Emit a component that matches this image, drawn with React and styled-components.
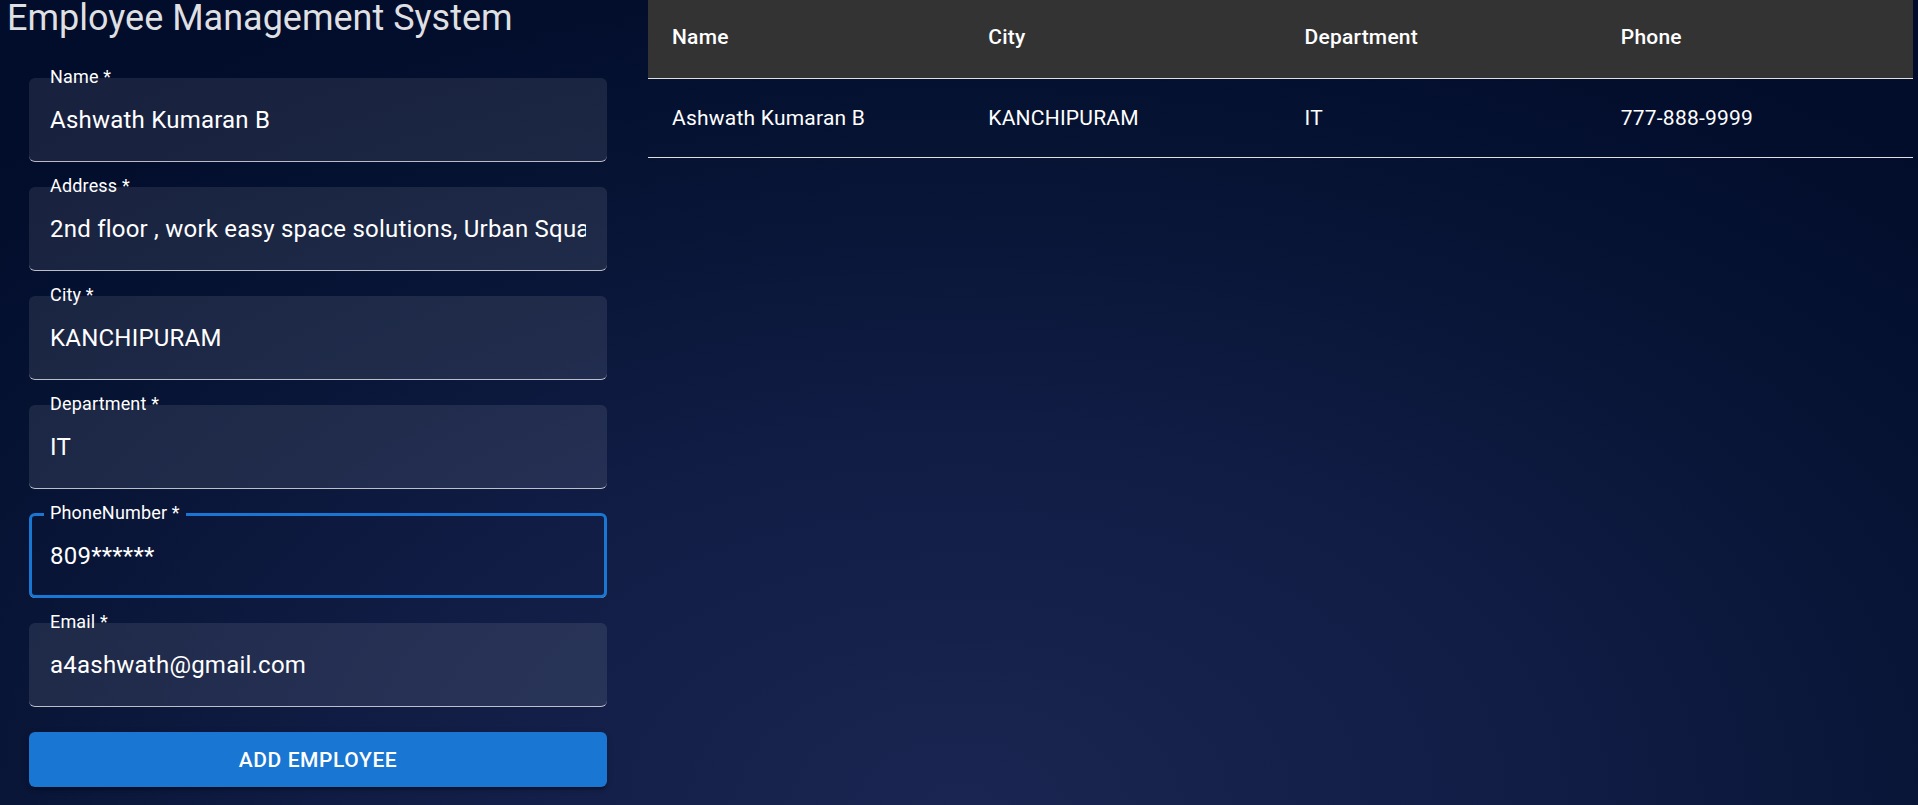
import React from "react";
import styled, { createGlobalStyle } from "styled-components";

const GlobalStyle = createGlobalStyle`
  * {
    box-sizing: border-box;
  }
  html,
  body {
    margin: 0;
    padding: 0;
    min-height: 100%;
  }
  body {
    font-family: Roboto, "Liberation Sans", Arial, sans-serif;
    background: radial-gradient(
      ellipse 75% 110% at 50% 100%,
      #1a2551 0%,
      #111d45 40%,
      #061333 75%,
      #020c2b 100%
    );
    background-attachment: fixed;
    min-height: 100vh;
    color: #fff;
  }
`;

const Page = styled.div`
  display: flex;
  align-items: flex-start;
  min-height: 100vh;
  padding-right: 5px;
`;

const FormColumn = styled.div`
  width: 648px;
  flex-shrink: 0;
  display: flex;
  flex-direction: column;
`;

const Title = styled.h1`
  margin: 0;
  padding-left: 7px;
  font-size: 36px;
  line-height: 36px;
  font-weight: 400;
  color: rgba(255, 255, 255, 0.88);
`;

const Form = styled.form`
  display: flex;
  flex-direction: column;
  gap: 25px;
  margin-top: 42px;
  padding: 0 41px 0 29px;
`;

const FieldWrap = styled.div`
  position: relative;
  height: 84px;
  border-radius: 6px;
  background: ${(props) =>
    props.focused ? "transparent" : "rgba(255, 255, 255, 0.09)"};
  border-bottom: 1px solid rgba(255, 255, 255, 0.7);
`;

const FieldLabel = styled.label`
  position: absolute;
  z-index: 2;
  top: -10px;
  left: 21px;
  font-size: 18px;
  line-height: 18px;
  letter-spacing: 0.17px;
  color: #fff;
  white-space: nowrap;
  pointer-events: none;
`;

const Input = styled.input`
  display: block;
  width: 100%;
  height: 84px;
  padding: 30px 21px;
  border: 0;
  outline: none;
  background: transparent;
  font-family: inherit;
  font-size: 24px;
  line-height: 24px;
  letter-spacing: 0.225px;
  color: #fff;
`;

const Outline = styled.fieldset`
  position: absolute;
  top: -5px;
  left: 0;
  right: 0;
  bottom: -1px;
  margin: 0;
  padding: 0 12px;
  border: 3px solid #1976d2;
  border-radius: 6px;
  pointer-events: none;
`;

const Notch = styled.legend`
  height: 11px;
  padding: 0 6px;
  font-size: 18px;
  line-height: 11px;
  letter-spacing: 0.17px;
  visibility: hidden;
  white-space: nowrap;
`;

const SubmitButton = styled.button`
  height: 55px;
  border: 0;
  border-radius: 6px;
  background: #1976d2;
  color: #fff;
  font-family: inherit;
  font-size: 21px;
  font-weight: 500;
  letter-spacing: 0.6px;
  text-transform: uppercase;
  cursor: pointer;
  box-shadow: 0 4px 2px -3px rgba(0, 0, 0, 0.25), 0 3px 3px 0 rgba(0, 0, 0, 0.18),
    0 2px 7px 0 rgba(0, 0, 0, 0.14);
`;

const TableColumn = styled.div`
  flex: 1;
`;

const Table = styled.table`
  width: 100%;
  table-layout: fixed;
  border-collapse: collapse;
`;

const HeadCell = styled.th`
  padding: 22px 24px 26px;
  background: #333333;
  border-bottom: 1px solid #e0e0e0;
  text-align: left;
  font-size: 21px;
  line-height: 30px;
  font-weight: 500;
  letter-spacing: 0.225px;
  color: #fff;
`;

const BodyCell = styled.td`
  padding: 24px;
  border-bottom: 1px solid #e0e0e0;
  font-size: 21px;
  line-height: 30px;
  font-weight: 400;
  letter-spacing: 0.225px;
  color: #fff;
`;

const fields = [
  { name: "Name", value: "Ashwath Kumaran B" },
  {
    name: "Address",
    value:
      "2nd floor , work easy space solutions, Urban Square, Kanchipuram, Tamil Nadu",
  },
  { name: "City", value: "KANCHIPURAM" },
  { name: "Department", value: "IT" },
  { name: "PhoneNumber", value: "809******", focused: true },
  { name: "Email", value: "a4ashwath@gmail.com" },
];

const employees = [
  {
    name: "Ashwath Kumaran B",
    city: "KANCHIPURAM",
    department: "IT",
    phone: "777-888-9999",
  },
];

function TextField({ name, value, focused }) {
  return (
    <FieldWrap focused={focused}>
      <FieldLabel htmlFor={name}>{name} *</FieldLabel>
      <Input id={name} defaultValue={value} />
      {focused && (
        <Outline>
          <Notch>
            <span>{name} *</span>
          </Notch>
        </Outline>
      )}
    </FieldWrap>
  );
}

export default function App() {
  return (
    <>
      <GlobalStyle />
      <Page>
        <FormColumn>
          <Title>Employee Management System</Title>
          <Form onSubmit={(e) => e.preventDefault()}>
            {fields.map((f) => (
              <TextField key={f.name} {...f} />
            ))}
            <SubmitButton type="submit">Add Employee</SubmitButton>
          </Form>
        </FormColumn>
        <TableColumn>
          <Table>
            <thead>
              <tr>
                <HeadCell>Name</HeadCell>
                <HeadCell>City</HeadCell>
                <HeadCell>Department</HeadCell>
                <HeadCell>Phone</HeadCell>
              </tr>
            </thead>
            <tbody>
              {employees.map((emp) => (
                <tr key={emp.name}>
                  <BodyCell>{emp.name}</BodyCell>
                  <BodyCell>{emp.city}</BodyCell>
                  <BodyCell>{emp.department}</BodyCell>
                  <BodyCell>{emp.phone}</BodyCell>
                </tr>
              ))}
            </tbody>
          </Table>
        </TableColumn>
      </Page>
    </>
  );
}
